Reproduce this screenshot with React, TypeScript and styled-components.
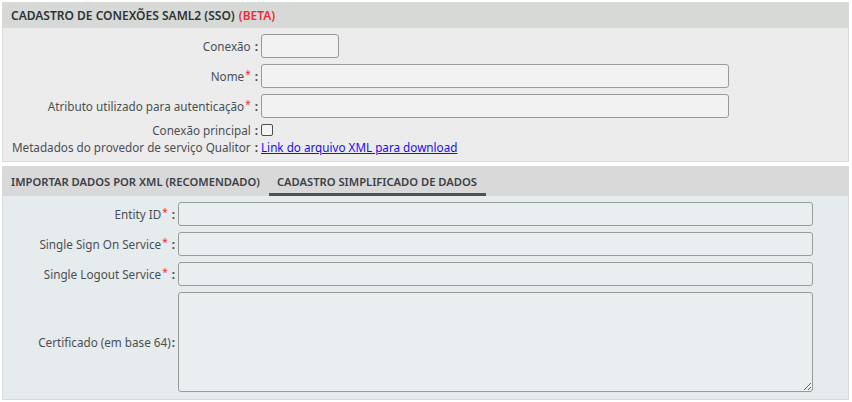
import React from "react";
import styled, { createGlobalStyle } from "styled-components";

const Global = createGlobalStyle`
  html, body { margin: 0; padding: 0; background: #ffffff; }
  body { font-family: "Noto Sans", "Open Sans", sans-serif; }
  * { box-sizing: border-box; }
`;

const Page = styled.div`
  width: 852px;
  padding: 2px 3px 0 2px;
  display: flex;
  flex-direction: column;
  gap: 4px;
`;

const Panel = styled.section<{ $tone: string }>`
  border: 1px solid #d9dbd9;
  background: ${(p) => p.$tone};
  display: flex;
  flex-direction: column;
`;

const Header = styled.div`
  height: 25px;
  background: #d7d9d6;
  display: flex;
  align-items: center;
  padding: 0 0 0 8px;
  font-size: 12px;
  font-weight: 600;
  color: #2f3336;
`;

const Beta = styled.span`
  color: #ee2a3a;
  margin-left: 4px;
`;

const Form = styled.div<{ $label: number; $pt: number; $pb: number }>`
  display: grid;
  grid-template-columns: ${(p) => p.$label}px 1fr;
  column-gap: 3px;
  row-gap: 6px;
  padding: ${(p) => p.$pt}px 0 ${(p) => p.$pb}px 0;
  align-items: center;
`;

const Label = styled.label<{ $shift?: number }>`
  justify-self: end;
  font-size: 11.7px;
  color: #4a4f53;
  white-space: nowrap;
  display: flex;
  align-items: center;
  margin-top: ${(p) => p.$shift ?? 0}px;
`;

const Req = styled.span`
  color: #ee2a3a;
  font-size: 10px;
  position: relative;
  top: -2px;
  margin-left: 1px;
`;

const Colon = styled.span<{ $tight?: boolean }>`
  margin-left: ${(p) => (p.$tight ? "1px" : "4px")};
  font-weight: 700;
  color: #4a4f53;
`;

const Input = styled.input<{ $w: number; $bg: string }>`
  width: ${(p) => p.$w}px;
  height: 24px;
  border: 1px solid #9a9a9a;
  border-radius: 3px;
  background: ${(p) => p.$bg};
  padding: 0 4px;
  font: inherit;
`;

const TextArea = styled.textarea<{ $w: number; $bg: string }>`
  width: ${(p) => p.$w}px;
  height: 100px;
  border: 1px solid #9a9a9a;
  border-radius: 3px;
  background: ${(p) => p.$bg};
  display: block;
  resize: both;
  font: inherit;
`;

const Check = styled.span`
  width: 12px;
  height: 12px;
  border: 1px solid #4a4f53;
  border-radius: 2px;
  background: #f4f4f4;
  display: block;
  margin-top: -2px;
`;

const Link = styled.a`
  color: #1a0dee;
  text-decoration: underline;
  font-size: 11.7px;
  cursor: pointer;
  justify-self: start;
  margin-top: -5px;
`;

const Tabs = styled.div`
  height: 29px;
  background: #d8d9d8;
  display: flex;
  align-items: stretch;
  padding-left: 8px;
  gap: 9px;
`;

const Tab = styled.div<{ $active?: boolean }>`
  display: flex;
  align-items: center;
  padding: 2px ${(p) => (p.$active ? "9px" : "0")} 0 ${(p) => (p.$active ? "8px" : "0")};
  font-size: 11.2px;
  font-weight: 600;
  color: #3c4146;
  border-bottom: 3px solid ${(p) => (p.$active ? "#4a5459" : "transparent")};
`;

export default function App() {
  const topBg = "#f2f2f2";
  const botBg = "#e9eef0";
  return (
    <>
      <Global />
      <Page>
        <Panel $tone="#ececec">
          <Header>
            CADASTRO DE CONEXÕES SAML2 (SSO)<Beta>(BETA)</Beta>
          </Header>
          <Form $label={255} $pt={6} $pb={6}>
            <Label>
              Conexão<Colon>:</Colon>
            </Label>
            <Input $w={78} $bg={topBg} />
            <Label>
              Nome<Req>*</Req>
              <Colon>:</Colon>
            </Label>
            <Input $w={468} $bg={topBg} />
            <Label>
              Atributo utilizado para autenticação<Req>*</Req>
              <Colon>:</Colon>
            </Label>
            <Input $w={468} $bg={topBg} />
            <Label $shift={-2}>
              Conexão principal<Colon>:</Colon>
            </Label>
            <Check />
            <Label $shift={-5}>
              Metadados do provedor de serviço Qualitor<Colon>:</Colon>
            </Label>
            <Link>Link do arquivo XML para download</Link>
          </Form>
        </Panel>
        <Panel $tone="#e6ebed">
          <Tabs>
            <Tab>IMPORTAR DADOS POR XML (RECOMENDADO)</Tab>
            <Tab $active>CADASTRO SIMPLIFICADO DE DADOS</Tab>
          </Tabs>
          <Form $label={172} $pt={6} $pb={7}>
            <Label>
              Entity ID<Req>*</Req>
              <Colon>:</Colon>
            </Label>
            <Input $w={635} $bg={botBg} />
            <Label>
              Single Sign On Service<Req>*</Req>
              <Colon>:</Colon>
            </Label>
            <Input $w={635} $bg={botBg} />
            <Label>
              Single Logout Service<Req>*</Req>
              <Colon>:</Colon>
            </Label>
            <Input $w={635} $bg={botBg} />
            <Label>
              Certificado (em base 64)<Colon $tight>:</Colon>
            </Label>
            <TextArea $w={635} $bg={botBg} />
          </Form>
        </Panel>
      </Page>
    </>
  );
}
